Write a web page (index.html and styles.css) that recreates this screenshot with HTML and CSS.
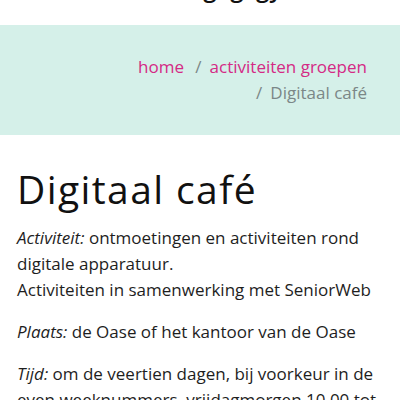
FILE: index.html
```html
<!DOCTYPE html>
<html lang="nl">
<head>
<meta charset="utf-8">
<title>Digitaal café</title>
<link rel="stylesheet" href="styles.css">
</head>
<body>
<header class="site-header">
  <div class="site-name">Oase: gag gy</div>
</header>
<nav class="banner">
  <ol class="crumbs">
    <li class="crumb"><a href="#">home</a></li>
    <li class="crumb"><a href="#">activiteiten groepen</a></li>
    <li class="crumb current">Digitaal café</li>
  </ol>
</nav>
<main class="content">
  <h1 class="title">Digitaal café</h1>
  <p><em>Activiteit:</em> ontmoetingen en activiteiten rond digitale apparatuur.<br>Activiteiten in samenwerking met SeniorWeb</p>
  <p><em>Plaats:</em> de Oase of het kantoor van de Oase</p>
  <p><em>Tijd:</em> om de veertien dagen, bij voorkeur in de even weeknummers, vrijdagmorgen 10.00 tot 12.00 uur</p>
</main>
</body>
</html>
```
FILE: styles.css
```css
html, body {
  margin: 0;
  padding: 0;
  background: #fff;
}
body {
  font-family: "Open Sans", "Liberation Sans", sans-serif;
  color: #1e1e1e;
  overflow: hidden;
}
.site-header {
  height: 25px;
  overflow: hidden;
}
.site-name {
  font-size: 24px;
  font-weight: 600;
  line-height: 24px;
  margin-top: -24px;
  padding-left: 126px;
  color: #111;
  word-spacing: 6px;
}
.banner {
  background: #d5f0e9;
  padding: 29px 33px 29px 100px;
}
.crumbs {
  list-style: none;
  margin: 0;
  padding: 0;
  text-align: right;
  font-size: 17px;
  line-height: 26px;
}
.crumb {
  display: inline;
  white-space: nowrap;
}
.crumb a {
  color: #d42a85;
  text-decoration: none;
}
.crumb + .crumb::before {
  content: "/";
  color: #7b8787;
  padding: 0 8px 0 7px;
}
.current {
  color: #7b8787;
}
.content {
  padding: 0 17px;
  font-size: 17px;
  line-height: 26px;
}
.title {
  font-size: 39px;
  font-weight: 500;
  letter-spacing: 1.4px;
  line-height: 46px;
  margin: 31px 0 13px;
  color: #111;
}
.content p {
  margin: 0 0 16px;
}
.content em {
  font-style: italic;
}
```
